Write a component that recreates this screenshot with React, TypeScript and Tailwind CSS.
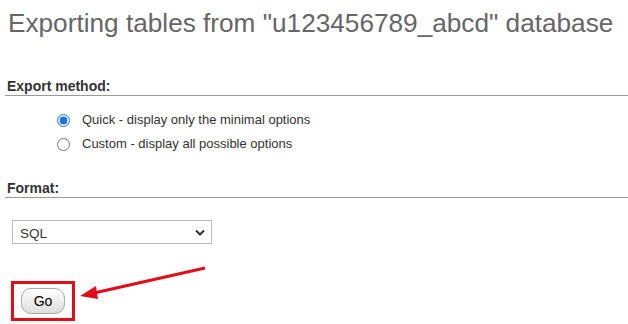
import { useState } from "react";

export default function App() {
  const [method, setMethod] = useState("quick");

  return (
    <div className="relative w-[628px] h-[324px] overflow-hidden bg-white text-[#333] font-['Liberation_Sans',Arial,sans-serif]">
      <h1 className="pl-[8px] pt-[7px] text-[26.2px] leading-[33px] text-[#666] font-normal whitespace-nowrap">
        Exporting tables from "u123456789_abcd" database
      </h1>

      <div className="mt-[38px] ml-[5px]">
        <h2 className="pl-[2px] text-[14px] leading-[16px] font-bold text-[#333] border-b border-[#999] pb-[1px]">
          Export method:
        </h2>
        <div className="pl-[52px] pt-[16px] flex flex-col gap-[8px] text-[13px] leading-[16px]">
          <label className="flex items-center gap-[12px]">
            <input
              type="radio"
              name="method"
              checked={method === "quick"}
              onChange={() => setMethod("quick")}
              className="w-[13px] h-[13px] accent-[#1a73e8] m-0"
            />
            Quick - display only the minimal options
          </label>
          <label className="flex items-center gap-[12px]">
            <input
              type="radio"
              name="method"
              checked={method === "custom"}
              onChange={() => setMethod("custom")}
              className="w-[13px] h-[13px] accent-[#1a73e8] m-0"
            />
            Custom - display all possible options
          </label>
        </div>
      </div>

      <div className="mt-[28px] ml-[5px]">
        <h2 className="pl-[2px] text-[14px] leading-[16px] font-bold text-[#333] border-b border-[#999] pb-[1px]">
          Format:
        </h2>
        <div className="pl-[7px] pt-[22px]">
          <div className="relative w-[200px] h-[24px] border border-[#bbb] bg-white">
            <select className="w-full h-full pl-[7px] text-[13.5px] text-[#333] bg-transparent appearance-none outline-none">
              <option>SQL</option>
            </select>
            <svg className="absolute right-[6px] top-[8px] pointer-events-none" width="10" height="7" viewBox="0 0 10 7">
              <path d="M1 1.5 L5 5.5 L9 1.5" fill="none" stroke="#333" strokeWidth="2" />
            </svg>
          </div>
        </div>
      </div>

      <div className="mt-[37px] ml-[11px] w-[64px] h-[40px] border-[3px] border-[#e00d1a] flex items-center justify-center">
        <button className="w-[44px] h-[26px] rounded-[10px] border border-[#aaa] bg-gradient-to-b from-white to-[#ddd] text-[14px] text-black">
          Go
        </button>
      </div>

      <svg className="absolute left-0 top-0 pointer-events-none" width="628" height="324">
        <line x1="205" y1="268" x2="94" y2="293" stroke="#e00d1a" strokeWidth="3" />
        <polygon points="80,296 96,286 98,299" fill="#e00d1a" />
      </svg>
    </div>
  );
}
